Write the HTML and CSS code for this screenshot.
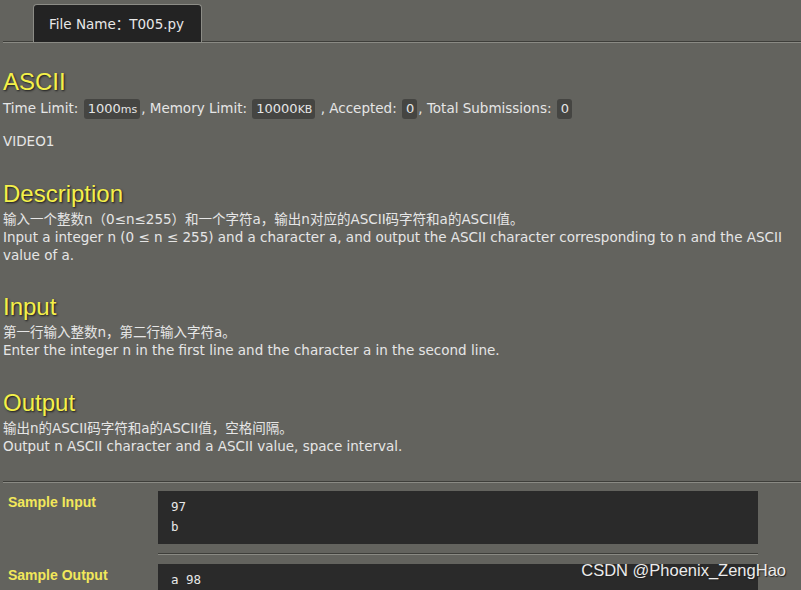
FILE: index.html
```html
<!DOCTYPE html>
<html>
<head>
<meta charset="utf-8">
<link rel="stylesheet" href="styles.css">
</head>
<body>
<div class="tabs">
  <div class="tab">File Name：T005.py</div>
</div>
<div class="problem">
  <h1 class="title">ASCII</h1>
  <div class="info">Time Limit: <code>1000<small>ms</small></code>, Memory Limit: <code>10000<small>KB</small></code> , Accepted: <code>0</code>, Total Submissions: <code>0</code></div>
  <p class="source">VIDEO1</p>
  <h2 class="sec">Description</h2>
  <div class="text">
    <div class="zh">输入一个整数n（0≤n≤255）和一个字符a，输出n对应的ASCII码字符和a的ASCII值。</div>
    <div class="en">Input a integer n (0 ≤ n ≤ 255) and a character a, and output the ASCII character corresponding to n and the ASCII value of a.</div>
  </div>
  <h2 class="sec">Input</h2>
  <div class="text">
    <div class="zh">第一行输入整数n，第二行输入字符a。</div>
    <div class="en">Enter the integer n in the first line and the character a in the second line.</div>
  </div>
  <h2 class="sec">Output</h2>
  <div class="text">
    <div class="zh">输出n的ASCII码字符和a的ASCII值，空格间隔。</div>
    <div class="en">Output n ASCII character and a ASCII value, space interval.</div>
  </div>
</div>
<div class="samples">
  <div class="sample">
    <div class="label">Sample Input</div>
    <pre class="box">97
b</pre>
  </div>
  <div class="sample">
    <div class="label">Sample Output</div>
    <pre class="box">a 98</pre>
  </div>
</div>
<div class="watermark">CSDN @Phoenix_ZengHao</div>
</body>
</html>
```
FILE: styles.css
```css
html, body {
  margin: 0;
  padding: 0;
  background: #63635e;
  height: 100%;
  overflow: hidden;
}
body {
  padding: 0 0 0 3px;
  font-family: "DejaVu Sans", Tahoma, sans-serif;
  font-size: 13.5px;
  color: #e6e6e6;
  position: relative;
}
.tabs {
  height: 42px;
  box-sizing: border-box;
  padding: 4px 0 0 30px;
  border-bottom: 1px solid #3e3e3a;
  box-shadow: 0 1px 0 #8a8a84;
}
.tab {
  display: inline-block;
  box-sizing: border-box;
  height: 38px;
  width: 169px;
  background: #232323;
  border: 1px solid #8c8c86;
  border-bottom: none;
  border-radius: 4px 4px 0 0;
  padding: 8px 0 0 15px;
  font-family: "DejaVu Sans", "Noto Sans CJK SC", sans-serif;
  font-size: 13.5px;
  color: #e8e8e8;
}
.problem {
  padding-top: 25px;
}
.title, .sec {
  margin: 0;
  font-family: "Liberation Sans", Arial, sans-serif;
  font-weight: normal;
  font-size: 24px;
  line-height: 30px;
  color: #f4f04a;
  text-shadow: 1px 1px 2px #1a1a1a;
}
.info {
  line-height: 22px;
  margin-top: 0;
}
code {
  font-family: "DejaVu Sans", sans-serif;
  font-size: 13px;
  background: #454542;
  border-radius: 3px;
  padding: 2px 3px 3px 4px;
  margin: 0 1px;
}
code small {
  font-size: 11px;
}
.source {
  margin: 9px 0 0;
  line-height: 22px;
}
.sec {
  margin-top: 27px;
}
.text + .sec {
  margin-top: 28px;
}
.zh {
  font-family: "DejaVu Sans", "Noto Sans CJK SC", sans-serif;
  font-size: 13.5px;
  line-height: 20px;
}
.en {
  line-height: 17.5px;
}
.samples {
  margin-top: 26px;
  border-top: 1px solid #3e3e3a;
  box-shadow: inset 0 1px 0 #8a8a84;
  padding-top: 9px;
}
.sample {
  display: grid;
  grid-template-columns: 155px 600px;
  margin-bottom: 20px;
}
.label {
  padding: 3px 0 0 5px;
  font-family: "Liberation Sans", Arial, sans-serif;
  font-weight: bold;
  font-size: 14px;
  color: #f2e85a;
}
.box {
  margin: 0;
  background: #2a2a2a;
  padding: 6px 13px 7px;
  font-family: "DejaVu Sans Mono", monospace;
  font-size: 12.5px;
  line-height: 20px;
  color: #e8e8e8;
  min-height: 38px;
  white-space: pre;
}
.sample:first-child .box {
  box-shadow: 0 9px 0 #63635e, 0 10px 0 #3e3e3a, 0 11px 0 #8a8a84;
}
.watermark {
  position: absolute;
  right: 15px;
  top: 561px;
  font-family: "Liberation Sans", Arial, sans-serif;
  font-size: 16.5px;
  color: #ececec;
  text-shadow: 1px 1px 1px #222;
}
```
